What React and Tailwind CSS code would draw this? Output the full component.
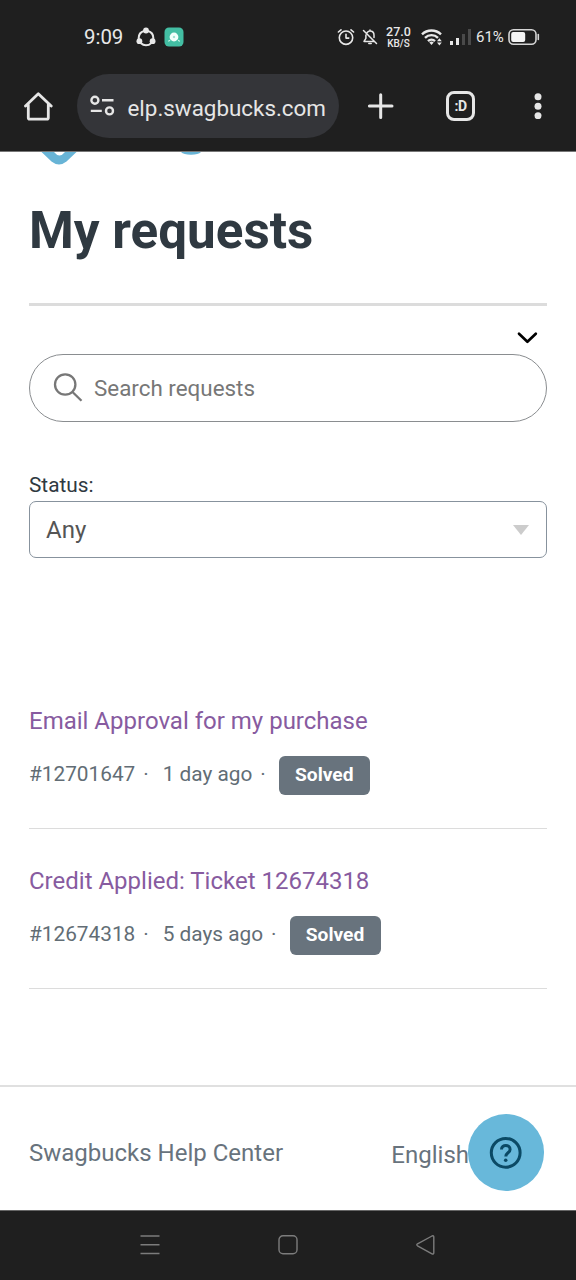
const requests = [
    { id: "#12701647", title: "Email Approval for my purchase", age: "1 day ago", status: "Solved" },
    { id: "#12674318", title: "Credit Applied: Ticket 12674318", age: "5 days ago", status: "Solved" },
];

const StatusBar = () => (
    <div className="h-[74px] flex items-center pl-[84px] text-[#e8e8e8]">
        <span className="w-[52px] text-[20.4px] leading-none whitespace-nowrap">9:09</span>

        {/* share app */}
        <svg className="w-5 h-5" viewBox="0 0 20 20" fill="none">
            <circle cx="10" cy="11" r="7.3" stroke="currentColor" strokeWidth="2" strokeDasharray="11.3 4" strokeDashoffset="-5.6" />
            <circle cx="10" cy="3.5" r="2.9" fill="currentColor" />
            <circle cx="3.4" cy="14.2" r="2.9" fill="currentColor" />
            <circle cx="16.6" cy="14.2" r="2.9" fill="currentColor" />
        </svg>
        <svg className="w-5 h-5 ml-[8px]" viewBox="0 0 20 20" fill="none">
            <rect x="0.5" y="0.5" width="19" height="19" rx="4.5" fill="#43bea3" />
            <circle cx="10" cy="10" r="4.4" fill="#f2fffb" />
            <path d="M4.7 14l1-.5M14.5 13.5l.8.6" stroke="#c9f3e8" strokeWidth="1.3" strokeLinecap="round" />
            <path d="M10 8.9v2.2M8.9 10h2.2" stroke="#8bd8c6" strokeWidth="1" />
        </svg>

        {/* alarm */}
        <svg className="w-[18px] h-[18px] ml-[153px]" viewBox="0 0 18 18" fill="none" stroke="currentColor" strokeWidth="1.6" strokeLinecap="round" strokeLinejoin="round">
            <circle cx="9" cy="9.7" r="6.7" />
            <path d="M9 6.3v3.8h2.8M1.4 4l2.6-2.2M16.6 4L14 1.8" />
        </svg>

        {/* muted bell */}
        <svg className="w-4 h-[18px] ml-[7px]" viewBox="0 0 16 18" fill="none" stroke="currentColor" strokeWidth="1.5" strokeLinecap="round" strokeLinejoin="round">
            <path d="M5.2 4.5C6 3.5 7 3 8 3c2.5 0 4 2 4 4.3v2.2M3.9 6.9v3.5L2 13.4h10.2M8 3V2M1.5 2.5l13 13M6.8 15.5h2.4" />
        </svg>

        <div className="w-[27px] ml-[7px] flex flex-col items-center font-medium whitespace-nowrap">
            <span className="h-[12px] text-[12.5px] leading-[12px]">27.0</span>
            <span className="h-[10px] text-[10px] leading-[11px]">KB/S</span>
        </div>

        {/* wifi */}
        <svg className="w-[22px] h-5 ml-[9px]" viewBox="0 0 22 20" fill="none" stroke="currentColor" strokeWidth="2.4">
            <path d="M1 7.4a13.6 13.6 0 0 1 19 0M4 10.8a9.3 9.3 0 0 1 13 0M7 14.1a5 5 0 0 1 7 0" />
            <path d="M10.5 18l-2.2-2.4a3.3 3.3 0 0 1 4.4 0z" fill="currentColor" stroke="none" />
            <path d="M16 14.2l2.4-3 2.4 3zM16 15.6l2.4 3 2.4-3z" fill="currentColor" stroke="none" />
        </svg>

        {/* signal */}
        <svg className="w-[21px] h-[18px] ml-[7px]" viewBox="0 0 21 18">
            <rect x="0" y="13" width="3" height="4" fill="currentColor" />
            <rect x="6" y="10" width="3" height="7" fill="currentColor" />
            <rect x="12" y="6" width="3" height="11" fill="#4a4a4a" />
            <rect x="18" y="1" width="3" height="16" fill="#4a4a4a" />
        </svg>
        <span className="w-[28px] ml-[5px] text-[15px] leading-none whitespace-nowrap">61%</span>

        {/* battery */}
        <svg className="w-8 h-[18px] ml-[4px]" viewBox="0 0 32 18" fill="none">
            <rect x="1" y="1.8" width="27" height="14.4" rx="4.5" stroke="#d5d5d5" strokeWidth="1.6" />
            <rect x="3.2" y="4" width="14" height="10" rx="2" fill="#f4f4f4" />
            <path d="M30.3 6.5v5" stroke="#d5d5d5" strokeWidth="1.6" strokeLinecap="round" />
        </svg>
    </div>
);

const BrowserBar = () => (
    <div className="h-[78px] flex items-start border-b border-[#777] text-[#e6e6e6]">
        <svg className="w-[30px] h-[30px] ml-[23px] mt-[17px]" viewBox="0 0 30 30" fill="none" stroke="currentColor" strokeWidth="2.8" strokeLinejoin="round" strokeLinecap="round">
            <path d="M2.5 15L15.3 2.8 28.2 15M5.3 13.5v13.3q0 1.4 1.4 1.4h17.2q1.4 0 1.4-1.4V13.5" />
        </svg>

        <div className="w-[262px] h-16 ml-[24px] pl-[13px] pr-[13px] rounded-full bg-[#343539] flex items-center justify-between">
            <svg className="w-[26px] h-[22px]" viewBox="0 0 26 22" fill="none" stroke="currentColor" strokeWidth="2.4">
                <circle cx="4.9" cy="5.2" r="3.5" />
                <circle cx="19.5" cy="15.9" r="3.5" />
                <path d="M12 5.2h11.5M.8 15.9h11" />
            </svg>
            <span className="pt-[3px] text-[22.4px] leading-8 whitespace-nowrap">elp.swagbucks.com</span>
        </div>

        <svg className="w-7 h-7 ml-[28px] mt-[18px]" viewBox="0 0 28 28" stroke="currentColor" strokeWidth="3" strokeLinecap="round">
            <path d="M13.7 2.8v22.6M2.4 14h22.6" />
        </svg>
        <div className="w-[29px] h-[30px] ml-[51px] mt-[17px] rounded-[8px] border-[3px] border-[#e6e6e6] flex items-center justify-center">
            <span className="text-[14px] leading-none font-bold tracking-[-0.5px]">:D</span>
        </div>
        <svg className="w-2 h-[26px] ml-[58.5px] mt-[19px]" viewBox="0 0 8 26" fill="currentColor">
            <circle cx="4" cy="3.7" r="3.5" />
            <circle cx="4" cy="13.2" r="3.5" />
            <circle cx="4" cy="22.7" r="3.5" />
        </svg>
    </div>
);

const RequestItem = ({ request }) => (
    <li className="h-40 pt-[36px] border-b-[1.5px] border-[#dcdcdc]">
        <a className="block text-[24px] leading-[32px] text-[#875ba0] whitespace-nowrap">{request.title}</a>
        <div className="mt-[19px] h-[39px] flex items-center text-[20.8px] text-[#626d75] whitespace-nowrap">
            <span className="-mt-px">{request.id}</span>
            <span className="-mt-px ml-[8px]">·</span>
            <span className="-mt-px ml-[14px]">{request.age}</span>
            <span className="-mt-px ml-[8px]">·</span>
            <span className="ml-[13px] w-[91px] h-[39px] rounded-[6px] bg-[#68737d] text-white text-[19.2px] font-bold flex items-center justify-center">
                {request.status}
            </span>
        </div>
    </li>
);

const HelpCenter = () => (
    <main className="h-[1058px] bg-white flex flex-col">
        {/* bottom edge of the site logo */}
        <svg className="w-[220px] h-[14px] ml-[30px] shrink-0" viewBox="0 0 220 14">
            <path d="M11.5 0l10 9.5q7.5 6 15 0L46.5 0H35q-5.5 7-11 0z" fill="#68b4d6" />
            <path d="M151 0q2.5 2.8 10 2.8T171 0z" fill="#68b4d6" />
        </svg>

        <section className="px-[29px]">
            <h1 className="h-[138px] pt-[35px] text-[51.2px] leading-[60px] font-bold text-[#2f3941]">My requests</h1>
            <div className="-mt-px h-[3px] bg-[#dcdcdc]" />

            <div className="h-[48px] flex justify-end pt-[20px] pr-[9px]">
                <svg className="w-[22px] h-[22px]" viewBox="0 0 22 22" fill="none" stroke="#000" strokeWidth="2.7" strokeLinecap="round" strokeLinejoin="round">
                    <path d="M3 7.8l8.4 8 8.4-8" />
                </svg>
            </div>

            <div className="h-[68px] rounded-full border-[1.6px] border-[#8a8d90] flex items-center pl-[23px]">
                <svg className="w-[30px] h-[30px]" viewBox="0 0 30 30" fill="none" stroke="#777" strokeWidth="2.3">
                    <circle cx="12.2" cy="11.5" r="10.2" />
                    <path d="M19.5 19l9 8.8" />
                </svg>
                <span className="ml-[11px] pt-px text-[22.4px] text-[#777]">Search requests</span>
            </div>

            <div className="mt-[48px] h-[31px] text-[20.8px] leading-[30px] text-[#2f3941]">Status:</div>
            <div className="h-[57px] rounded-[7px] border-[1.6px] border-[#87929d] flex items-center justify-between pl-[16px] pr-[17px]">
                <span className="text-[24px] text-[#555]">Any</span>
                <svg className="w-4 h-[10px]" viewBox="0 0 16 10"><path d="M0 0h16L8 10z" fill="#ccc" /></svg>
            </div>

            <ul className="mt-[111px]">
                {requests.map((request) => (
                    <RequestItem key={request.id} request={request} />
                ))}
            </ul>
        </section>

        <footer className="relative mt-auto h-[125px] border-t-2 border-[#e0e0e0] pl-[29px] pr-[107px] flex justify-between text-[24px] leading-[32px] text-[#68737d]">
            <span className="mt-[50px] whitespace-nowrap">Swagbucks Help Center</span>
            <span className="mt-[52px]">English</span>
            <button className="absolute right-[32px] top-[27px] w-[76px] h-[77px] rounded-full bg-[#68b8da] flex items-center justify-center">
                <svg className="w-[34px] h-[34px]" viewBox="0 0 34 34" fill="none" stroke="#0b4a65" strokeWidth="3">
                    <circle cx="16.7" cy="16.8" r="14.4" />
                    <path d="M12.5 13.6c0-5.5 8.6-5.5 8.6-.2 0 3.3-4.3 3.4-4.3 7" />
                    <circle cx="16.7" cy="24.3" r="1.8" fill="#0b4a65" stroke="none" />
                </svg>
            </button>
        </footer>
    </main>
);

const NavigationBar = () => (
    <nav className="h-[70px] border-t border-[#666] text-[#7c7c7c]">
        <div className="h-[67px] pl-[140px] pr-[140px] flex items-center justify-between">
            <svg className="w-5 h-[22px]" viewBox="0 0 20 22" stroke="currentColor" strokeWidth="1.5">
                <path d="M.5 2h19M.5 10.8h19M.5 19.6h19" />
            </svg>
            <svg className="w-[22px] h-[22px]" viewBox="0 0 22 22" fill="none" stroke="currentColor" strokeWidth="1.4">
                <rect x="2" y="1.8" width="18" height="18" rx="4" />
            </svg>
            <svg className="w-5 h-[22px]" viewBox="0 0 20 22" fill="none" stroke="currentColor" strokeWidth="1.4" strokeLinejoin="round">
                <path d="M1.5 9.8q-1.4 1 0 2l14.5 8q1.8.8 1.8-1V3q0-1.8-1.8-1z" />
            </svg>
        </div>
    </nav>
);

const App = () => {
    return (
        <div className="w-[576px] h-[1280px] overflow-hidden bg-[#1f1f1f] font-[Roboto,sans-serif]">
            <StatusBar />
            <BrowserBar />
            <HelpCenter />
            <NavigationBar />
        </div>
    );
};

export default App;
